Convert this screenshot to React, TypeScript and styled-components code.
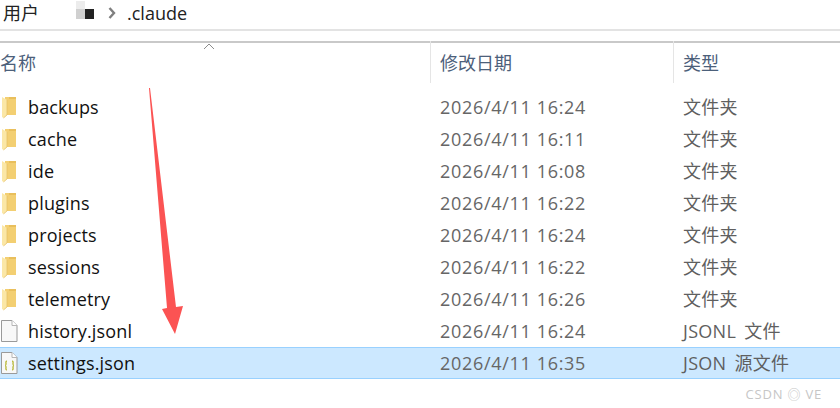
import React from 'react'
import styled, { createGlobalStyle } from 'styled-components'

const GlobalStyle = createGlobalStyle`
  html, body {
    margin: 0;
    padding: 0;
    background: #fff;
  }
`

const Window = styled.div`
  position: relative;
  width: 840px;
  height: 408px;
  overflow: hidden;
  background: #fff;
  font-family: 'Open Sans', 'Noto Sans CJK SC', sans-serif;
  font-size: 18px;
`

const Breadcrumb = styled.div`
  display: flex;
  align-items: center;
  height: 29px;
  padding-left: 3px;
  border-bottom: 2px solid #e3e3e3;
  color: #222;
`

const Crumb = styled.span`
  line-height: 26px;
  margin-top: -3px;
`

const Blur = styled.div`
  display: grid;
  grid-template-columns: 9px 9px;
  grid-template-rows: 8px 10px;
  margin: -9px 0 0 37px;
`

const BlurCell = styled.div<{ $color: string }>`
  background: ${(p) => p.$color};
`

const Chevron = styled.svg`
  width: 8px;
  height: 12px;
  margin: -3px 11px 0 14px;
`

const HeaderRow = styled.div`
  position: relative;
  display: grid;
  grid-template-columns: 430px 243px 1fr;
  height: 40px;
  margin-top: 10px;
  border-top: 2px solid #c9c9c9;
  color: #4c607a;
`

const SortCaret = styled.svg`
  position: absolute;
  left: 203px;
  top: 0;
  width: 12px;
  height: 7px;
`

const HeaderCell = styled.div<{ $divider?: boolean }>`
  display: flex;
  align-items: center;
  padding-left: ${(p) => (p.$divider ? '9px' : '0')};
  border-left: ${(p) => (p.$divider ? '1px solid #e5e5e5' : 'none')};
  margin-top: -2px;
  padding-bottom: 1px;
`

const List = styled.div`
  display: flex;
  flex-direction: column;
  margin-top: 8px;
`

const Row = styled.div<{ $selected?: boolean }>`
  display: grid;
  grid-template-columns: 430px 243px 1fr;
  align-items: center;
  box-sizing: border-box;
  height: 32px;
  line-height: 28px;
  background: ${(p) => (p.$selected ? '#cce8ff' : 'transparent')};
  border-top: 1px solid ${(p) => (p.$selected ? '#99d1ff' : 'transparent')};
  border-bottom: 1px solid ${(p) => (p.$selected ? '#99d1ff' : 'transparent')};
`

const NameCell = styled.div`
  display: flex;
  align-items: center;
  color: #111;
  letter-spacing: 0.16px;
`

const IconSlot = styled.svg`
  flex: none;
  width: 18px;
  height: 24px;
  margin: 0 10px 0 0;
`

const Cell = styled.div`
  padding-left: 10px;
  color: #666;
  letter-spacing: 0.68px;
`

const TypeCell = styled.div`
  padding-left: 10px;
  color: #5f5f5f;
  letter-spacing: 0.3px;
  word-spacing: 3px;
`

const Arrow = styled.svg`
  position: absolute;
  left: 140px;
  top: 80px;
  width: 60px;
  height: 260px;
`

const Watermark = styled.div`
  position: absolute;
  right: 18px;
  top: 384px;
  font-size: 13px;
  letter-spacing: 0.8px;
  color: #c6c6c6;
`

type Item = {
  name: string
  date: string
  type: string
  kind: 'folder' | 'file' | 'json'
  selected?: boolean
}

const items: Item[] = [
  { name: 'backups', date: '2026/4/11 16:24', type: '文件夹', kind: 'folder' },
  { name: 'cache', date: '2026/4/11 16:11', type: '文件夹', kind: 'folder' },
  { name: 'ide', date: '2026/4/11 16:08', type: '文件夹', kind: 'folder' },
  { name: 'plugins', date: '2026/4/11 16:22', type: '文件夹', kind: 'folder' },
  { name: 'projects', date: '2026/4/11 16:24', type: '文件夹', kind: 'folder' },
  { name: 'sessions', date: '2026/4/11 16:22', type: '文件夹', kind: 'folder' },
  { name: 'telemetry', date: '2026/4/11 16:26', type: '文件夹', kind: 'folder' },
  { name: 'history.jsonl', date: '2026/4/11 16:24', type: 'JSONL 文件', kind: 'file' },
  { name: 'settings.json', date: '2026/4/11 16:35', type: 'JSON 源文件', kind: 'json', selected: true },
]

function FileIcon({ kind }: { kind: Item['kind'] }) {
  if (kind === 'folder') {
    return (
      <IconSlot viewBox="0 0 18 24">
        <path d="M5 2 H16 V20 H5 Z" fill="#f3cf72" />
        <path d="M9 2 H16 V4 H9 Z" fill="#e9bf5c" />
        <path d="M2 2 L7 5 V20 L3.5 23 L2 22 Z" fill="#fbe7a6" />
        <path d="M7 5 V20 L3.5 23" fill="none" stroke="#e4bd62" strokeWidth="0.7" />
      </IconSlot>
    )
  }
  return (
    <IconSlot viewBox="0 0 18 24">
      <path d="M1.5 1.5 H12 L17 6.5 V22.5 H1.5 Z" fill="#f8f8f8" stroke="#9a9a9a" />
      <path d="M12 1.5 V6.5 H17" fill="#fff" stroke="#b5b5b5" />
      {kind === 'json' && (
        <g fill="none" stroke="#b0b020" strokeWidth="1.2">
          <path d="M7 10 C5.5 10 6 11.5 6 13 C6 14 5.5 14.5 5 14.5 C5.5 14.5 6 15 6 16 C6 17.5 5.5 19 7 19" />
          <path d="M12 10 C13.5 10 13 11.5 13 13 C13 14 13.5 14.5 14 14.5 C13.5 14.5 13 15 13 16 C13 17.5 13.5 19 12 19" />
        </g>
      )}
    </IconSlot>
  )
}

export default function App() {
  return (
    <Window>
      <GlobalStyle />
      <Breadcrumb>
        <Crumb>用户</Crumb>
        <Blur>
          <BlurCell $color="#ececec" />
          <BlurCell $color="#ffffff" />
          <BlurCell $color="#d0d0d0" />
          <BlurCell $color="#222222" />
        </Blur>
        <Chevron viewBox="0 0 8 12">
          <path d="M1.5 1 L6 6 L1.5 11" fill="none" stroke="#7f7f7f" strokeWidth="2.4" />
        </Chevron>
        <Crumb>.claude</Crumb>
      </Breadcrumb>
      <HeaderRow>
        <SortCaret viewBox="0 0 12 7">
          <path d="M1 6 L6 1 L11 6" fill="none" stroke="#8c8c8c" />
        </SortCaret>
        <HeaderCell>名称</HeaderCell>
        <HeaderCell $divider>修改日期</HeaderCell>
        <HeaderCell $divider>类型</HeaderCell>
      </HeaderRow>
      <List>
        {items.map((item) => (
          <Row key={item.name} $selected={item.selected}>
            <NameCell>
              <FileIcon kind={item.kind} />
              <span>{item.name}</span>
            </NameCell>
            <Cell>{item.date}</Cell>
            <TypeCell>{item.type}</TypeCell>
          </Row>
        ))}
      </List>
      <Arrow viewBox="140 80 60 260">
        <path
          d="M149 88 L150 88 L176 307 L183 306 L175 334 L162 309 L167 308 Z"
          fill="#fb5353"
        />
      </Arrow>
      <Watermark>CSDN ◎ VE</Watermark>
    </Window>
  )
}
